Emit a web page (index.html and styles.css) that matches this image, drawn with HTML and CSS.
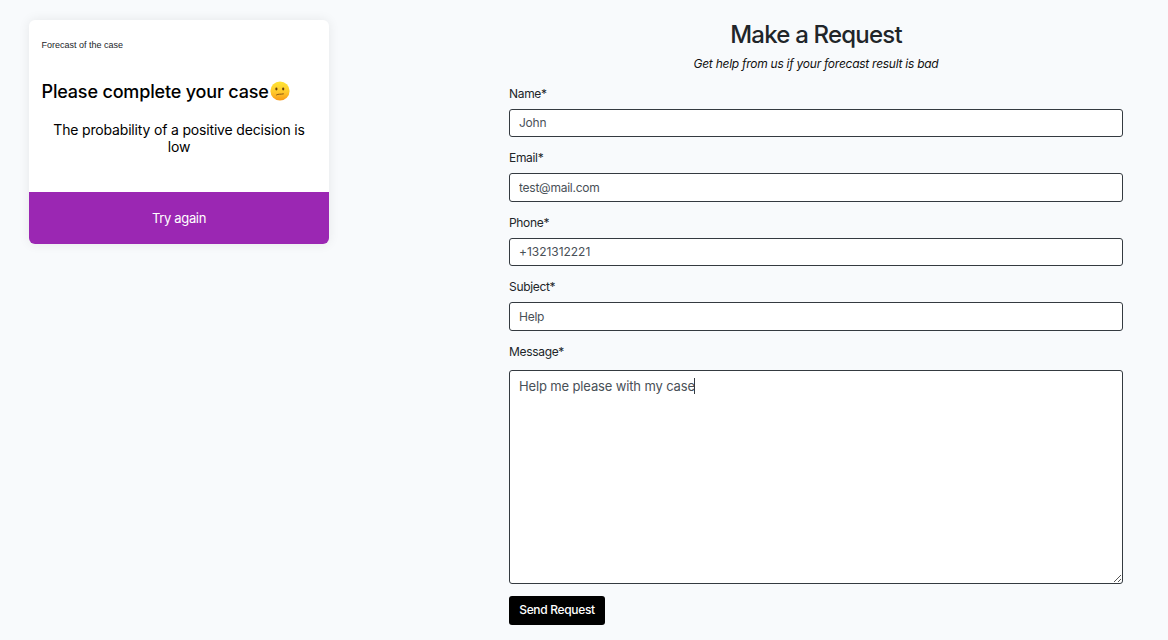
FILE: index.html
```html
<!DOCTYPE html>
<html lang="en">
<head>
<meta charset="utf-8">
<title>Make a Request</title>
<link rel="stylesheet" href="styles.css">
</head>
<body>
<main class="page">
  <section class="card">
    <div class="card-body">
      <p class="card-label">Forecast of the case</p>
      <h2 class="card-title"><span class="card-title-text">Please complete your case</span><svg class="emoji" viewBox="0 0 20 20" aria-hidden="true">
        <defs><linearGradient id="face" x1="0" y1="0" x2="0" y2="1"><stop offset="0" stop-color="#ffe536"/><stop offset=".55" stop-color="#ffc92b"/><stop offset="1" stop-color="#f99a16"/></linearGradient></defs>
        <circle cx="10" cy="10" r="9.6" fill="url(#face)"/>
        <ellipse cx="6.4" cy="8" rx="1.1" ry="1.4" fill="#67400f"/>
        <ellipse cx="13.2" cy="8" rx="1.1" ry="1.4" fill="#67400f"/>
        <path d="M6.5 13.9C8.5 12.7 10.8 13.5 13.4 12.9" fill="none" stroke="#8c5a14" stroke-width="1" stroke-linecap="round"/>
      </svg></h2>
      <p class="card-text">The probability of a positive decision is low</p>
    </div>
    <button class="card-action" type="button">Try again</button>
  </section>

  <form class="request">
    <h1 class="title">Make a Request</h1>
    <p class="subtitle">Get help from us if your forecast result is bad</p>
    <div class="field"><label class="label" for="name">Name*</label><input class="control" id="name" value="John"></div>
    <div class="field"><label class="label" for="email">Email*</label><input class="control" id="email" value="test@mail.com"></div>
    <div class="field"><label class="label" for="phone">Phone*</label><input class="control control-phone" id="phone" value="+1321312221"></div>
    <div class="field"><label class="label" for="subject">Subject*</label><input class="control" id="subject" value="Help"></div>
    <label class="label label-message" for="message">Message*</label>
    <div class="message-wrap">
      <textarea class="message" id="message">Help me please with my case</textarea>
      <span class="caret"></span>
      <svg class="grip" viewBox="0 0 9 9" aria-hidden="true"><path d="M1 8L8 1M5 8L8 5" fill="none" stroke="#555" stroke-width="1"/></svg>
    </div>
    <button class="send" type="button">Send Request</button>
  </form>
</main>
</body>
</html>
```

FILE: styles.css
```css
* { box-sizing: border-box; }
body {
  margin: 0;
  background: #f8fafc;
  color: #212529;
  font-family: Inter, "Liberation Sans", sans-serif;
  font-size: 12px;
}
h1, h2, p { margin: 0; font-weight: 400; }
button, input, textarea { font-family: inherit; margin: 0; }
.page {
  display: flex;
  align-items: flex-start;
  height: 640px;
  padding: 20px 45px 0 29px;
  overflow: hidden;
}
.card {
  flex: none;
  width: 300px;
  height: 224px;
  margin-right: 180px;
  display: flex;
  flex-direction: column;
  border-radius: 6px;
  background: #fff;
  box-shadow: 0 0 12px rgba(0, 0, 0, .08);
  overflow: hidden;
}
.card-body { height: 172px; padding: 18px 12.5px 0; color: #000; }
.card-label {
  font: 9px/14px "Liberation Sans", sans-serif;
  color: #212529;
}
.card-title {
  display: flex;
  align-items: center;
  height: 24px;
  margin-top: 27px;
  font-size: 18px;
  font-weight: 500;
  letter-spacing: -.17px;
  white-space: nowrap;
}
.card-title-text { width: 228px; }
.emoji { width: 20px; height: 20px; flex: none; }
.card-text {
  margin-top: 18px;
  padding: 0 10px;
  font-size: 14px;
  line-height: 17px;
  letter-spacing: -.17px;
  text-align: center;
}
.card-action {
  height: 52px;
  border: 0;
  background: #9b27b3;
  color: #fff;
  font-size: 13px;
  letter-spacing: -.35px;
}
.request { width: 614px; }
.title {
  height: 30px;
  font-size: 24px;
  line-height: 30px;
  font-weight: 500;
  letter-spacing: -.8px;
  text-align: center;
}
.subtitle {
  height: 18px;
  margin: 5px 0 11.6px;
  line-height: 18px;
  font-style: italic;
  letter-spacing: -.26px;
  text-align: center;
  color: #111;
}
.field { height: 64.5px; }
.label { display: block; height: 24px; line-height: 18px; letter-spacing: -.32px; }
.control {
  display: block;
  width: 100%;
  height: 28.5px;
  padding: 0 9px;
  border: 1px solid #343a40;
  border-radius: 3px;
  background: #fff;
  color: #495057;
  font-size: 12px;
  letter-spacing: -.25px;
}
.control-phone { letter-spacing: -.03px; }
.label-message { height: 27.4px; }
.message-wrap { position: relative; height: 214px; }
.message {
  display: block;
  width: 100%;
  height: 100%;
  padding: 6px 9px;
  border: 1px solid #343a40;
  border-radius: 3px;
  background: #fff;
  color: #495057;
  font-size: 13px;
  line-height: 19px;
  letter-spacing: -.14px;
  resize: none;
}
.caret {
  position: absolute;
  left: 185px;
  top: 8px;
  width: 1px;
  height: 16px;
  background: #343a40;
}
.grip { position: absolute; right: 1px; bottom: 1px; width: 9px; height: 9px; }
.send {
  display: block;
  width: 96px;
  height: 29px;
  margin-top: 12px;
  padding: 0 0 2px;
  border: 0;
  border-radius: 3px;
  background: #000;
  color: #fff;
  font-size: 12px;
  font-weight: 500;
  letter-spacing: -.33px;
}
```
